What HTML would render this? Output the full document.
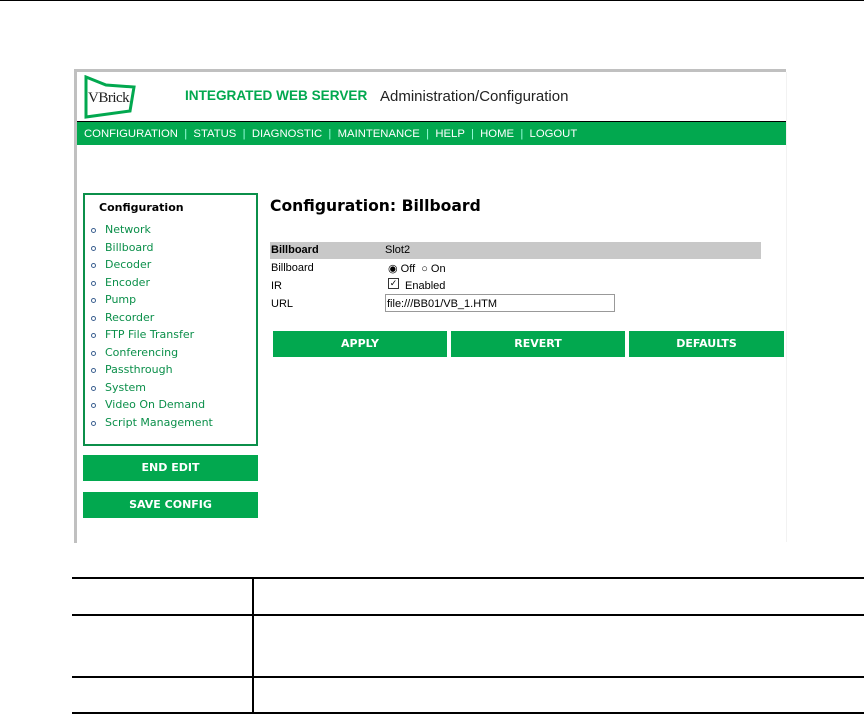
<!DOCTYPE html>
<html><head><style>
body{margin:0;width:864px;height:714px;position:relative;background:#fff;font-family:"Liberation Sans",sans-serif;overflow:hidden}
.a{position:absolute}
.btn{position:absolute;background:#02a84f;color:#fff;font-weight:bold;font-size:11px;text-align:center;font-family:"DejaVu Sans",sans-serif}
.side div{height:17.55px;font-family:"DejaVu Sans",sans-serif;font-size:11px;color:#0b8f4a;position:relative;padding-left:20px}
.side div:before{content:"";position:absolute;left:6px;top:5px;width:3px;height:3px;border:1.5px solid #3a5f8f;border-radius:50%}
.side div.h:before{display:none}
.hl{position:absolute;height:2px;background:#000;left:72px;width:792px}
</style></head><body>
<div class="a" style="left:0;top:0;width:864px;height:1px;background:#000"></div>
<div class="a" style="left:74px;top:69px;width:712px;height:3px;background:#c0c0c0"></div>
<div class="a" style="left:74px;top:69px;width:3px;height:474px;background:#c0c0c0"></div>
<div class="a" style="left:786px;top:72px;width:1px;height:470px;background:#f2f2f2"></div>
<svg class="a" style="left:84px;top:75px" width="54" height="44" viewBox="0 0 54 44"><path d="M2 2 L22 10 L50 12 L46 36 L2 42 Z" fill="none" stroke="#02a84f" stroke-width="3"/><text x="4" y="27" font-family="Liberation Serif" font-size="15" fill="#222" letter-spacing="-0.5">VBrick</text></svg>
<div class="a" style="left:185px;top:88px;font-size:13.6px;font-weight:bold;color:#02a84f;white-space:nowrap">INTEGRATED WEB SERVER</div>
<div class="a" style="left:380px;top:88px;font-size:15px;color:#222;white-space:nowrap">Administration/Configuration</div>
<div class="a" style="left:77px;top:121px;width:709px;height:1px;background:#000"></div>
<div class="a" style="left:77px;top:122px;width:709px;height:23px;background:#02a84f;color:#fff;font-size:11.3px;line-height:24px;padding-left:7px;box-sizing:border-box;white-space:pre">CONFIGURATION  <span style="color:#9fd">|</span>  STATUS  <span style="color:#9fd">|</span>  DIAGNOSTIC  <span style="color:#9fd">|</span>  MAINTENANCE  <span style="color:#9fd">|</span>  HELP  <span style="color:#9fd">|</span>  HOME  <span style="color:#9fd">|</span>  LOGOUT</div>
<div class="a side" style="left:83px;top:193px;width:171px;height:249px;border:2px solid #0b8f4a">
<div class="h" style="padding-left:14px;color:#000;font-weight:bold;height:auto;margin:6px 0 9px;font-size:11px">Configuration</div>
<div>Network</div><div>Billboard</div><div>Decoder</div><div>Encoder</div><div>Pump</div><div>Recorder</div><div>FTP File Transfer</div><div>Conferencing</div><div>Passthrough</div><div>System</div><div>Video On Demand</div><div>Script Management</div>
</div>
<div class="btn" style="left:83px;top:455px;width:175px;height:26px;line-height:26px">END EDIT</div>
<div class="btn" style="left:83px;top:492px;width:175px;height:26px;line-height:26px">SAVE CONFIG</div>
<div class="a" style="left:270px;top:197px;font-size:15.6px;font-weight:bold;font-family:'DejaVu Sans',sans-serif">Configuration: Billboard</div>
<div class="a" style="left:270px;top:242px;width:491px;height:17px;background:#c8c8c8"></div>
<div class="a" style="left:271px;top:244px;font-size:11px;font-weight:bold">Billboard</div>
<div class="a" style="left:385px;top:244px;font-size:11px">Slot2</div>
<div class="a" style="left:271px;top:262px;font-size:11px">Billboard</div>
<div class="a" style="left:388px;top:262px;font-size:11px">◉ Off &nbsp;○ On</div>
<div class="a" style="left:271px;top:280px;font-size:11px">IR</div>
<div class="a" style="left:388px;top:278px;width:9px;height:9px;border:1px solid #333;font-size:9px;line-height:9px;text-align:center">✓</div>
<div class="a" style="left:405px;top:280px;font-size:11px">Enabled</div>
<div class="a" style="left:271px;top:298px;font-size:11px">URL</div>
<div class="a" style="left:385px;top:294px;width:230px;height:18px;border:1px solid #999;font-size:11px;line-height:18px;padding-left:1px;box-sizing:border-box">file:///BB01/VB_1.HTM</div>
<div class="btn" style="left:273px;top:331px;width:174px;height:26px;line-height:26px">APPLY</div>
<div class="btn" style="left:451px;top:331px;width:174px;height:26px;line-height:26px">REVERT</div>
<div class="btn" style="left:629px;top:331px;width:155px;height:26px;line-height:26px">DEFAULTS</div>
<div class="hl" style="top:577px"></div>
<div class="hl" style="top:614px"></div>
<div class="hl" style="top:676px"></div>
<div class="hl" style="top:712px"></div>
<div class="a" style="left:252px;top:577px;width:2px;height:137px;background:#000"></div>
</body></html>
